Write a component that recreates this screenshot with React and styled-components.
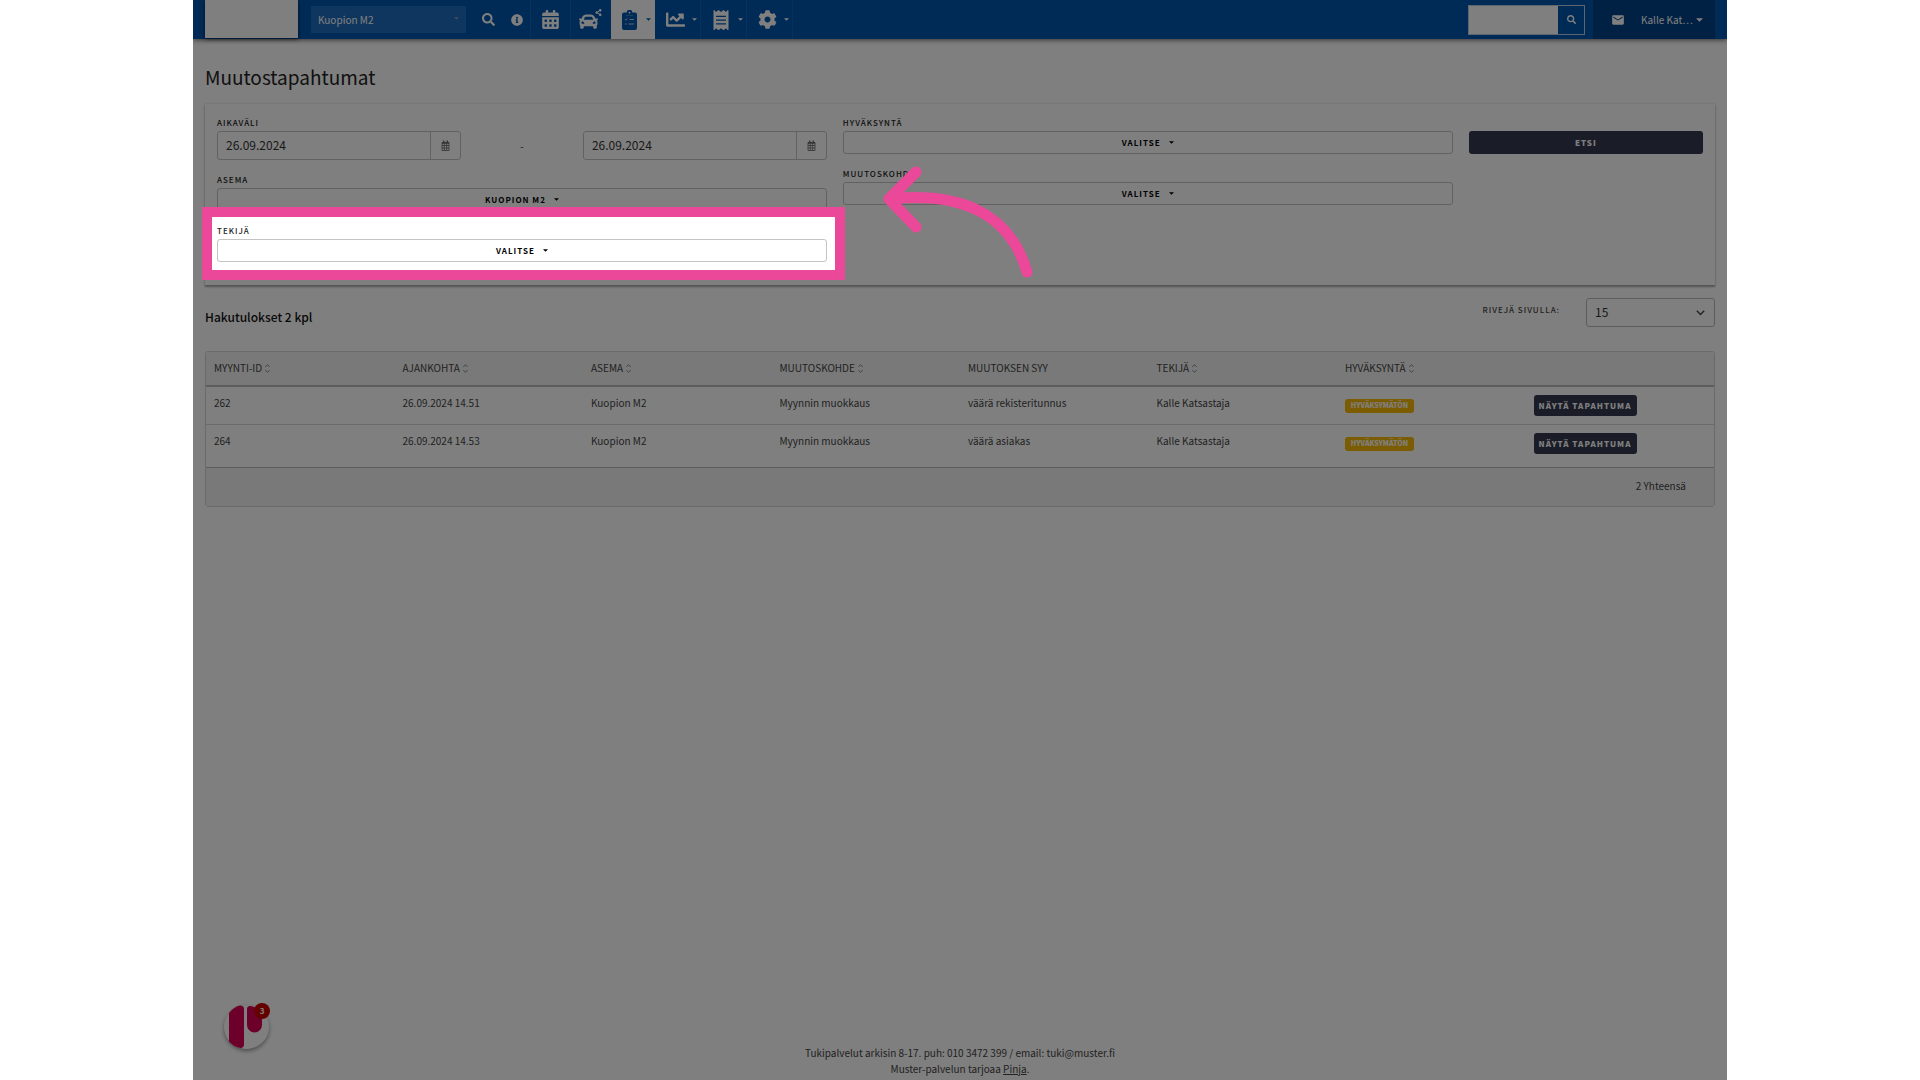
import React from "react";
import styled, { createGlobalStyle, css } from "styled-components";
import {
  FaSearch,
  FaInfoCircle,
  FaCalendarAlt,
  FaCar,
  FaShareAlt,
  FaChartLine,
  FaReceipt,
  FaCog,
} from "react-icons/fa";
import { MdEmail } from "react-icons/md";

const GlobalStyle = createGlobalStyle`
  * { box-sizing: border-box; }
  body {
    margin: 0;
    background: #fff;
    color: #333;
    font-family: "Noto Sans CJK SC", "Noto Sans", sans-serif;
    font-size: 10px;
    line-height: 16px;
  }
  button, input, select { font: inherit; color: inherit; margin: 0; }
  a { color: inherit; }
`;

const Page = styled.div`
  position: relative;
  display: flex;
  flex-direction: column;
  min-height: 100vh;
  margin: 0 193px;
  overflow: hidden;
  background: #fff;
`;

/* ---------- Top bar ---------- */

const TopBar = styled.header`
  display: flex;
  align-items: stretch;
  height: 39px;
  padding: 0 12px;
  background: #0056ac;
  color: #fff;
  box-shadow: 0 1px 5px rgba(0, 0, 0, 0.6);
`;

const Logo = styled.div`
  width: 93px;
  height: 38px;
  margin-right: 13px;
  background: #fff;
  box-shadow: 0 1px 4px rgba(0, 0, 0, 0.6);
`;

const StationPicker = styled.div`
  position: relative;
  align-self: center;
  width: 155px;
  margin-right: 7px;

  svg {
    position: absolute;
    top: 11px;
    right: 7px;
    color: #8a9aa8;
    pointer-events: none;
  }
`;

const StationSelect = styled.select`
  appearance: none;
  display: block;
  width: 100%;
  height: 27px;
  padding: 0 7px;
  border: 0;
  background: #1c6cbc;
  font-size: 10px;
`;

const Nav = styled.nav`
  display: flex;
`;

const NavLink = styled.a`
  display: flex;
  align-items: center;
  justify-content: ${(p) => (p.$menu ? "flex-start" : "center")};
  gap: 7px;
  width: ${(p) => p.$width}px;
  padding-left: ${(p) => (p.$menu ? (p.$active ? 8 : 10) : 0)}px;
  border-right: ${(p) => (p.$divided ? "1px solid #1264b6" : "0")};
  ${(p) =>
    p.$active &&
    css`
      background: #fff;
      color: #0056ac;
    `}
`;

const IconBox = styled.span`
  display: flex;
  justify-content: center;
  width: 20px;
`;

const SearchForm = styled.form`
  display: flex;
  align-self: center;
  height: 30px;
  margin-left: auto;
  margin-right: 8px;
  border: 1px solid #b8cce0;
`;

const SearchInput = styled.input`
  width: 89px;
  padding: 0 6px;
  border: 0;
  background: #fff;
`;

const SearchButton = styled.button`
  display: flex;
  align-items: center;
  justify-content: center;
  width: 26px;
  padding: 0;
  border: 0;
  background: #0056ac;
`;

const UserArea = styled.div`
  display: flex;
  align-items: center;
  gap: 16px;
  width: 122px;
  padding-left: 18px;
  background: #004288;
`;

const UserButton = styled.button`
  display: flex;
  align-items: center;
  gap: 3px;
  padding: 0;
  border: 0;
  background: none;
`;

/* ---------- Search panel ---------- */

const Main = styled.main`
  padding: 0 12px;
`;

const Title = styled.h1`
  margin: 24px 0 13px;
  font-size: 19px;
  line-height: 28px;
  font-weight: 400;
  color: #222;
`;

const Panel = styled.section`
  display: grid;
  grid-template-columns: repeat(12, 1fr);
  column-gap: 16px;
  padding: 10px 12px 23px;
  border-bottom: 1px solid #aaa;
  box-shadow: 0 0 3px rgba(0, 0, 0, 0.12), 0 1px 2px rgba(0, 0, 0, 0.3);
`;

const Column = styled.div`
  grid-column: span ${(p) => p.$span};
  display: flex;
  flex-direction: column;
  gap: 11px;
  padding-top: ${(p) => (p.$flush ? 17 : 0)}px;
`;

const Field = styled.div`
  position: relative;
`;

const Label = styled.label`
  display: block;
  font-size: 8px;
  line-height: 17px;
  font-weight: 500;
  letter-spacing: 1px;
  text-transform: uppercase;
  color: #222;
`;

const PickerButton = styled.button`
  display: flex;
  align-items: center;
  justify-content: center;
  gap: 8px;
  width: 100%;
  height: 23px;
  padding: 0;
  border: 1px solid #c4c4c4;
  border-radius: 3px;
  background: #fff;
  color: #000;
  font-size: 8px;
  font-weight: 700;
  letter-spacing: 1px;
  text-transform: uppercase;
`;

const DarkButton = styled.button`
  width: ${(p) => (p.$block ? "100%" : "103px")};
  height: ${(p) => (p.$block ? 23 : 21)}px;
  padding: 0;
  border: 0;
  border-radius: 3px;
  background: #343850;
  color: #fff;
  font-size: 8px;
  line-height: 16px;
  font-weight: 900;
  letter-spacing: 1px;
  text-transform: uppercase;
`;

const DateRange = styled.div`
  display: grid;
  grid-template-columns: 2fr 1fr 2fr;
  align-items: center;
  text-align: center;
`;

const DateGroup = styled.div`
  display: flex;
  height: 29px;
  border: 1px solid #c4c4c4;
  border-radius: 3px;
`;

const DateInput = styled.input`
  flex: 1;
  min-width: 0;
  padding: 0 8px 2px;
  border: 0;
  background: none;
  font-size: 12px;
`;

const DateButton = styled.button`
  display: flex;
  align-items: center;
  justify-content: center;
  width: 30px;
  padding: 0;
  border: 0;
  border-left: 1px solid #c4c4c4;
  background: none;
`;

/* Dims the page around the highlighted field */
const Spotlight = styled.div`
  position: absolute;
  z-index: 10;
  inset: -5px -8px -8px -5px;
  box-shadow: 0 0 0 4000px rgba(0, 0, 0, 0.5);
  pointer-events: none;
`;

const SpotlightFrame = styled.div`
  position: absolute;
  z-index: 11;
  inset: -15px -18px -18px -15px;
  border: 10px solid #ec4899;
  pointer-events: none;
`;

const Arrow = styled.svg`
  position: absolute;
  z-index: 12;
  left: 100%;
  bottom: -20px;
  margin-left: 48px;
  pointer-events: none;
`;

/* ---------- Results ---------- */

const ResultsBar = styled.div`
  display: flex;
  align-items: flex-start;
  justify-content: space-between;
  padding: 12px 0 24px;
`;

const ResultsTitle = styled.h2`
  margin: 9px 0 0;
  font-size: 12px;
  line-height: 20px;
  font-weight: 500;
  color: #111;
`;

const PageSize = styled.div`
  display: flex;
  gap: 26px;

  label {
    margin-top: 3px;
    color: #444;
  }
`;

const PageSizeBox = styled.div`
  position: relative;

  svg {
    position: absolute;
    top: 12px;
    right: 10px;
    pointer-events: none;
  }
`;

const PageSizeSelect = styled.select`
  appearance: none;
  display: block;
  width: 129px;
  height: 29px;
  padding: 0 8px 2px;
  border: 1px solid #bbb;
  border-radius: 3px;
  background: #fff;
  font-size: 12px;
`;

const TableFrame = styled.div`
  border: 1px solid #d4d4d4;
  border-radius: 3px;
`;

const Table = styled.table`
  width: 100%;
  table-layout: fixed;
  border-collapse: separate;
  border-spacing: 0;
  color: #444;
`;

const HeadCell = styled.th`
  height: 35px;
  padding: 0 8px 2px;
  border-bottom: 2px solid #bbb;
  background: #f2f2f2;
  font-weight: 400;
  text-align: left;
  text-transform: uppercase;

  svg {
    margin-left: 3px;
    vertical-align: -1px;
  }
`;

const Cell = styled.td`
  height: ${(p) => (p.$last ? 43 : 38)}px;
  padding: 8px 8px 0;
  border-bottom: 1px solid ${(p) => (p.$last ? "#bbb" : "#d4d4d4")};
  vertical-align: top;
`;

const FootCell = styled.td`
  height: 38px;
  padding: 0 28px 2px;
  background: #f2f2f2;
  text-align: right;
`;

const Badge = styled.span`
  display: block;
  width: 69px;
  height: 14px;
  margin-top: 4px;
  border-radius: 3px;
  background: #f8b800;
  color: #fff;
  font-size: 7px;
  line-height: 12px;
  font-weight: 900;
  text-align: center;
  text-transform: uppercase;
`;

/* ---------- Footer ---------- */

const Footer = styled.footer`
  margin-top: auto;
  padding-bottom: 3px;
  text-align: center;
  color: #444;
`;

const ChatButton = styled.button`
  position: absolute;
  left: 31px;
  bottom: 31px;
  width: 45px;
  height: 44px;
  padding: 0;
  border: 0;
  border-radius: 50%;
  background: #fff;
  box-shadow: 0 2px 4px rgba(0, 0, 0, 0.4);

  svg {
    display: block;
  }
`;

const ChatCount = styled.span`
  position: absolute;
  top: -2px;
  right: -1px;
  width: 16px;
  height: 16px;
  border-radius: 50%;
  background: #c80000;
  color: #fff;
  font-size: 8px;
  line-height: 16px;
  font-weight: 700;
`;

/* ---------- Icons ---------- */

const Caret = ({ size = 6 }) => (
  <svg width={size} height={Math.ceil(size / 2)} viewBox="0 0 6 3" aria-hidden="true">
    <path d="M0 0h6L3 3z" fill="currentColor" />
  </svg>
);

const ClipboardIcon = () => (
  <svg width="15" height="20" viewBox="0 0 15 20" fill="currentColor" aria-hidden="true">
    <path d="M2 2.500h2.700a2.800 2.800 0 0 1 5.600 0H13a2 2 0 0 1 2 2V18a2 2 0 0 1-2 2H2a2 2 0 0 1-2-2V4.500a2 2 0 0 1 2-2z" />
    <circle cx="7.500" cy="2.700" r="0.900" fill="#fff" />
    <path d="M4 5.500h7" stroke="#fff" strokeWidth="0.600" opacity="0.4" />
    <path
      d="M3 9.300l0.900 0.900 1.600-1.800M3 14h1.600M7.500 9.500H12M6.500 14H12"
      fill="none"
      stroke="#fff"
      strokeWidth="0.900"
      opacity="0.8"
    />
  </svg>
);

const SharedCarIcon = () => (
  <svg width="24" height="22" viewBox="0 0 24 22" aria-hidden="true">
    <g transform="translate(0 3)">
      <FaCar size={19} />
    </g>
    <g transform="translate(16 0)">
      <FaShareAlt size={7} />
    </g>
  </svg>
);

const SmallCalendarIcon = () => (
  <svg width="9" height="11" viewBox="0 0 9 11" fill="none" stroke="#666" aria-hidden="true">
    <path d="M1 2.500h7v8h-7zM1 5.500h7M1 8h7M3.300 4v6.500M5.700 4v6.500" strokeWidth="0.800" />
    <path d="M1 3h7" strokeWidth="1.600" />
    <path d="M2.700 0.500v2M6.300 0.500v2" strokeWidth="1.300" />
  </svg>
);

const SortIcon = () => (
  <svg width="5" height="9" viewBox="0 0 5 9" fill="none" stroke="#777" strokeWidth="0.900" aria-hidden="true">
    <path d="M0.600 3V2.500L2.500 0.800l1.900 1.700V3M0.600 6v0.500l1.900 1.700 1.900-1.700V6" />
  </svg>
);

const ChevronIcon = () => (
  <svg width="9" height="6" viewBox="0 0 9 6" fill="none" stroke="#444" strokeWidth="1.400" aria-hidden="true">
    <path d="M0.800 0.800l3.700 3.700 3.700-3.700" />
  </svg>
);

const BrandMark = () => (
  <svg width="46" height="44" viewBox="0 0 46 44" fill="#d80056" aria-hidden="true">
    <path d="M5 8Q10 1.500 16 0.500Q20 0.500 20 4V39Q20 43 16.500 43Q10 42 5 36.500z" />
    <path d="M23 4Q23 0.500 27 1Q34 2.500 38 7V20a7.500 7.500 0 0 1-15 0z" />
  </svg>
);

/* ---------- Data ---------- */

const menus = [
  { name: "Tapahtumat", icon: <ClipboardIcon />, active: true },
  { name: "Raportit", icon: <FaChartLine size={19} /> },
  { name: "Kuitit", icon: <FaReceipt size={20} /> },
  { name: "Asetukset", icon: <FaCog size={19} /> },
];

const columns = [
  { title: "Myynti-ID", sortable: true },
  { title: "Ajankohta", sortable: true },
  { title: "Asema", sortable: true },
  { title: "Muutoskohde", sortable: true },
  { title: "Muutoksen syy" },
  { title: "Tekijä", sortable: true },
  { title: "Hyväksyntä", sortable: true },
  { title: "" },
];

const rows = [
  ["262", "26.09.2024 14.51", "Kuopion M2", "Myynnin muokkaus", "väärä rekisteritunnus", "Kalle Katsastaja"],
  ["264", "26.09.2024 14.53", "Kuopion M2", "Myynnin muokkaus", "väärä asiakas", "Kalle Katsastaja"],
];

const Picker = ({ id, label, value, children }) => (
  <Field>
    <Label htmlFor={id}>{label}</Label>
    <PickerButton id={id} type="button">
      {value}
      <Caret size={5} />
    </PickerButton>
    {children}
  </Field>
);

const DateField = ({ id, label }) => (
  <DateGroup>
    <DateInput id={id} aria-label={label} defaultValue="26.09.2024" />
    <DateButton type="button" aria-label="Valitse päivä">
      <SmallCalendarIcon />
    </DateButton>
  </DateGroup>
);

export default function App() {
  return (
    <>
      <GlobalStyle />
      <Page>
        <TopBar>
          <Logo />
          <StationPicker>
            <StationSelect aria-label="Asema" defaultValue="Kuopion M2">
              <option>Kuopion M2</option>
            </StationSelect>
            <Caret size={5} />
          </StationPicker>
          <Nav>
            <NavLink href="#haku" aria-label="Haku" $width={30}>
              <FaSearch size={13} />
            </NavLink>
            <NavLink href="#tiedot" aria-label="Tiedot" $width={28} $divided>
              <FaInfoCircle size={12} />
            </NavLink>
            <NavLink href="#kalenteri" aria-label="Kalenteri" $width={40} $divided>
              <FaCalendarAlt size={19} />
            </NavLink>
            <NavLink href="#ajoneuvot" aria-label="Ajoneuvot" $width={40}>
              <SharedCarIcon />
            </NavLink>
            {menus.map((m) => (
              <NavLink
                key={m.name}
                href={"#" + m.name.toLowerCase()}
                aria-label={m.name}
                $menu
                $active={m.active}
                $divided={!m.active}
                $width={m.active ? 44 : 46}
              >
                <IconBox>{m.icon}</IconBox>
                <Caret size={5} />
              </NavLink>
            ))}
          </Nav>
          <SearchForm>
            <SearchInput aria-label="Hae" />
            <SearchButton type="button" aria-label="Hae">
              <FaSearch size={9} />
            </SearchButton>
          </SearchForm>
          <UserArea>
            <MdEmail size={14} />
            <UserButton type="button">
              Kalle Kat…
              <Caret size={7} />
            </UserButton>
          </UserArea>
        </TopBar>

        <Main>
          <Title>Muutostapahtumat</Title>
          <Panel>
            <Column $span={5}>
              <Field>
                <Label htmlFor="alku">Aikaväli</Label>
                <DateRange>
                  <DateField id="alku" label="Aikaväli alkaa" />
                  <span>-</span>
                  <DateField id="loppu" label="Aikaväli päättyy" />
                </DateRange>
              </Field>
              <Picker id="asema" label="Asema" value="Kuopion M2" />
              <Picker id="tekija" label="Tekijä" value="Valitse">
                <Spotlight />
                <SpotlightFrame />
                <Arrow width="160" height="120" viewBox="874 162 160 120" fill="none" aria-hidden="true">
                  <path
                    d="M915 172L888 199L915 227M888 199C955 192 1008 210 1026 272"
                    stroke="#ec4899"
                    strokeWidth="11"
                    strokeLinecap="round"
                    strokeLinejoin="round"
                  />
                </Arrow>
              </Picker>
            </Column>
            <Column $span={5}>
              <Picker id="hyvaksynta" label="Hyväksyntä" value="Valitse" />
              <Picker id="muutoskohde" label="Muutoskohde" value="Valitse" />
            </Column>
            <Column $span={2} $flush>
              <DarkButton type="button" $block>
                Etsi
              </DarkButton>
            </Column>
          </Panel>

          <ResultsBar>
            <ResultsTitle>Hakutulokset 2 kpl</ResultsTitle>
            <PageSize>
              <Label htmlFor="rivit">Rivejä sivulla:</Label>
              <PageSizeBox>
                <PageSizeSelect id="rivit" defaultValue="15">
                  <option>15</option>
                </PageSizeSelect>
                <ChevronIcon />
              </PageSizeBox>
            </PageSize>
          </ResultsBar>

          <TableFrame>
            <Table>
              <thead>
                <tr>
                  {columns.map((c) => (
                    <HeadCell key={c.title} scope="col">
                      {c.title}
                      {c.sortable && <SortIcon />}
                    </HeadCell>
                  ))}
                </tr>
              </thead>
              <tbody>
                {rows.map((row, i) => {
                  const last = i === rows.length - 1;
                  return (
                    <tr key={row[0]}>
                      {row.map((text) => (
                        <Cell key={text} $last={last}>
                          {text}
                        </Cell>
                      ))}
                      <Cell $last={last}>
                        <Badge>Hyväksymätön</Badge>
                      </Cell>
                      <Cell $last={last}>
                        <DarkButton type="button">Näytä tapahtuma</DarkButton>
                      </Cell>
                    </tr>
                  );
                })}
              </tbody>
              <tfoot>
                <tr>
                  <FootCell colSpan={columns.length}>2 Yhteensä</FootCell>
                </tr>
              </tfoot>
            </Table>
          </TableFrame>
        </Main>

        <Footer>
          <div>Tukipalvelut arkisin 8-17. puh: 010 3472 399 / email: tuki@muster.fi</div>
          <div>
            Muster-palvelun tarjoaa <a href="#pinja">Pinja</a>.
          </div>
        </Footer>

        <ChatButton type="button" aria-label="Avaa keskustelu">
          <BrandMark />
          <ChatCount>3</ChatCount>
        </ChatButton>
      </Page>
    </>
  );
}
